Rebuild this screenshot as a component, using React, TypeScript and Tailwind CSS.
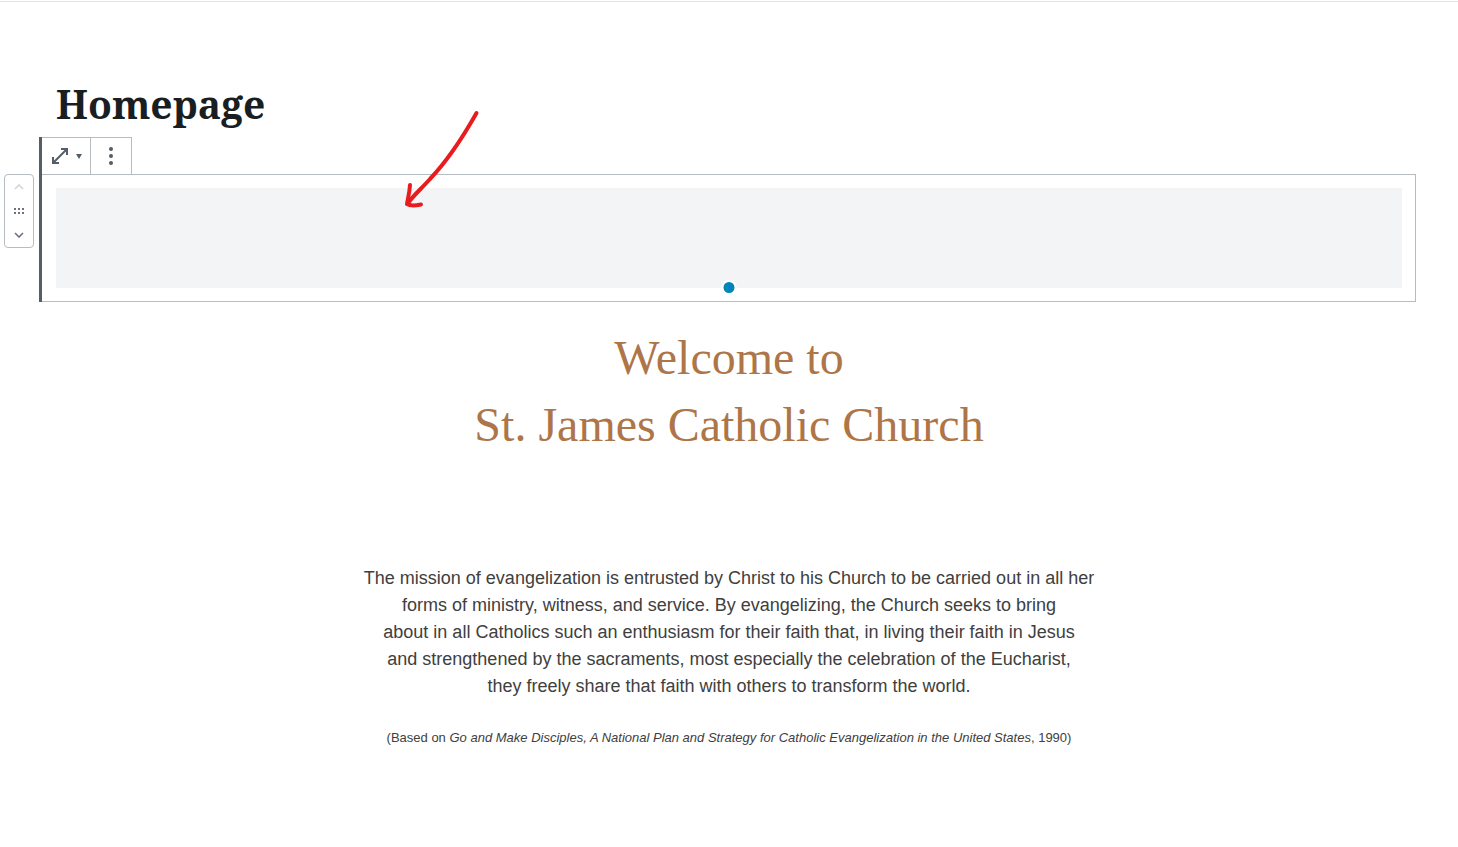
import { useState } from "react";

const missionLines = [
  "The mission of evangelization is entrusted by Christ to his Church to be carried out in all her",
  "forms of ministry, witness, and service. By evangelizing, the Church seeks to bring",
  "about in all Catholics such an enthusiasm for their faith that, in living their faith in Jesus",
  "and strengthened by the sacraments, most especially the celebration of the Eucharist,",
  "they freely share that faith with others to transform the world.",
];

function BlockMover() {
  return (
    <div className="mt-[37px] flex h-[74px] w-[30px] shrink-0 flex-col rounded border border-[#b5bcc2] bg-white text-[#6c7380]">
      <button type="button" aria-label="Move up" disabled className="flex h-6 items-center justify-center text-[#d3d5d9]">
        <svg width="10" height="6" viewBox="0 0 10 6" fill="none" stroke="currentColor" strokeWidth="1.6">
          <path d="M1 5 5 1l4 4" />
        </svg>
      </button>
      <button type="button" aria-label="Drag block" className="flex h-6 items-center justify-center">
        <svg width="10" height="6" viewBox="0 0 10 6" fill="currentColor">
          <path d="M0 0h2v2H0zM4 0h2v2H4zM8 0h2v2H8zM0 4h2v2H0zM4 4h2v2H4zM8 4h2v2H8z" />
        </svg>
      </button>
      <button type="button" aria-label="Move down" className="flex h-6 items-center justify-center">
        <svg width="10" height="6" viewBox="0 0 10 6" fill="none" stroke="currentColor" strokeWidth="1.6">
          <path d="M1 1l4 4 4-4" />
        </svg>
      </button>
    </div>
  );
}

function BlockToolbar() {
  return (
    <div className="flex h-[37px] w-fit border-t border-r border-[#b5bcc2] text-[#555d66]">
      <button type="button" aria-label="Change alignment" className="flex w-12 items-center justify-center gap-2 pl-0.5">
        <svg width="16" height="16" viewBox="0 0 16 16" fill="none" stroke="currentColor" strokeWidth="2">
          <path d="M2 14 14 2" />
          <path d="M9 1h6v6M1 9v6h6" />
        </svg>
        <svg width="6" height="5" viewBox="0 0 6 5" fill="currentColor">
          <path d="M0 0h6L3 5z" />
        </svg>
      </button>
      <button type="button" aria-label="More options" className="flex w-[41px] items-center justify-center border-l border-[#b5bcc2]">
        <svg width="4" height="18" viewBox="0 0 4 18" fill="currentColor">
          <circle cx="2" cy="2" r="2" />
          <circle cx="2" cy="9" r="2" />
          <circle cx="2" cy="16" r="2" />
        </svg>
      </button>
    </div>
  );
}

export default function App() {
  const [title, setTitle] = useState("Homepage");

  return (
    <div className="relative min-h-screen bg-white pt-px font-['Liberation_Sans',Arial,sans-serif]">
      <div className="border-t border-[#e2e4e7]" />

      <input
        aria-label="Page title"
        value={title}
        onChange={(e) => setTitle(e.target.value)}
        className="mt-[67px] block h-[68px] w-full px-14 font-['Noto_Serif','DejaVu_Serif',serif] text-[39px] font-bold text-[#191e23] outline-none"
      />

      {/* Selected spacer block */}
      <div className="flex gap-[5px] pr-[42px] pl-1">
        <BlockMover />
        <div className="flex-1 border-l-3 border-[#555d66]">
          <BlockToolbar />
          <div className="border-y border-r border-[#b5bcc2] py-[13px] pr-[13px] pl-[14px]">
            <div className="relative h-[100px] bg-[#f3f4f5]">
              <button
                type="button"
                aria-label="Resize spacer"
                className="absolute -bottom-[7px] left-1/2 size-[15px] -translate-x-1/2 rounded-full border-2 border-white bg-[#0085ba]"
              />
            </div>
          </div>
        </div>
      </div>

      <h2 className="mt-[22px] text-center font-['Liberation_Serif','Times_New_Roman',serif] text-[48px] leading-[67px] text-[#ae7548]">
        Welcome to
        <br />
        St. James Catholic Church
      </h2>

      <p className="mt-[107px] text-center text-[18px] leading-[27px] text-[#404040]">
        {missionLines.map((line) => (
          <span key={line} className="block">
            {line}
          </span>
        ))}
      </p>

      <p className="mt-7 text-center text-[13px] leading-5 text-[#404040]">
        (Based on{" "}
        <em>Go and Make Disciples, A National Plan and Strategy for Catholic Evangelization in the United States</em>
        , 1990)
      </p>

      {/* Hand-drawn arrow over the block */}
      <svg
        className="pointer-events-none absolute top-[100px] left-[390px]"
        width="110"
        height="120"
        viewBox="0 0 110 120"
        fill="none"
        stroke="#e81c1f"
        strokeWidth="4"
        strokeLinecap="round"
        strokeLinejoin="round"
      >
        <path d="M86.500 13C73 37 58 60 40 79 31 89 24 95 18 103" />
        <path d="M20 85C19.500 93 18 98 17 104 20 106 26 105.500 31 104.500" />
      </svg>
    </div>
  );
}
